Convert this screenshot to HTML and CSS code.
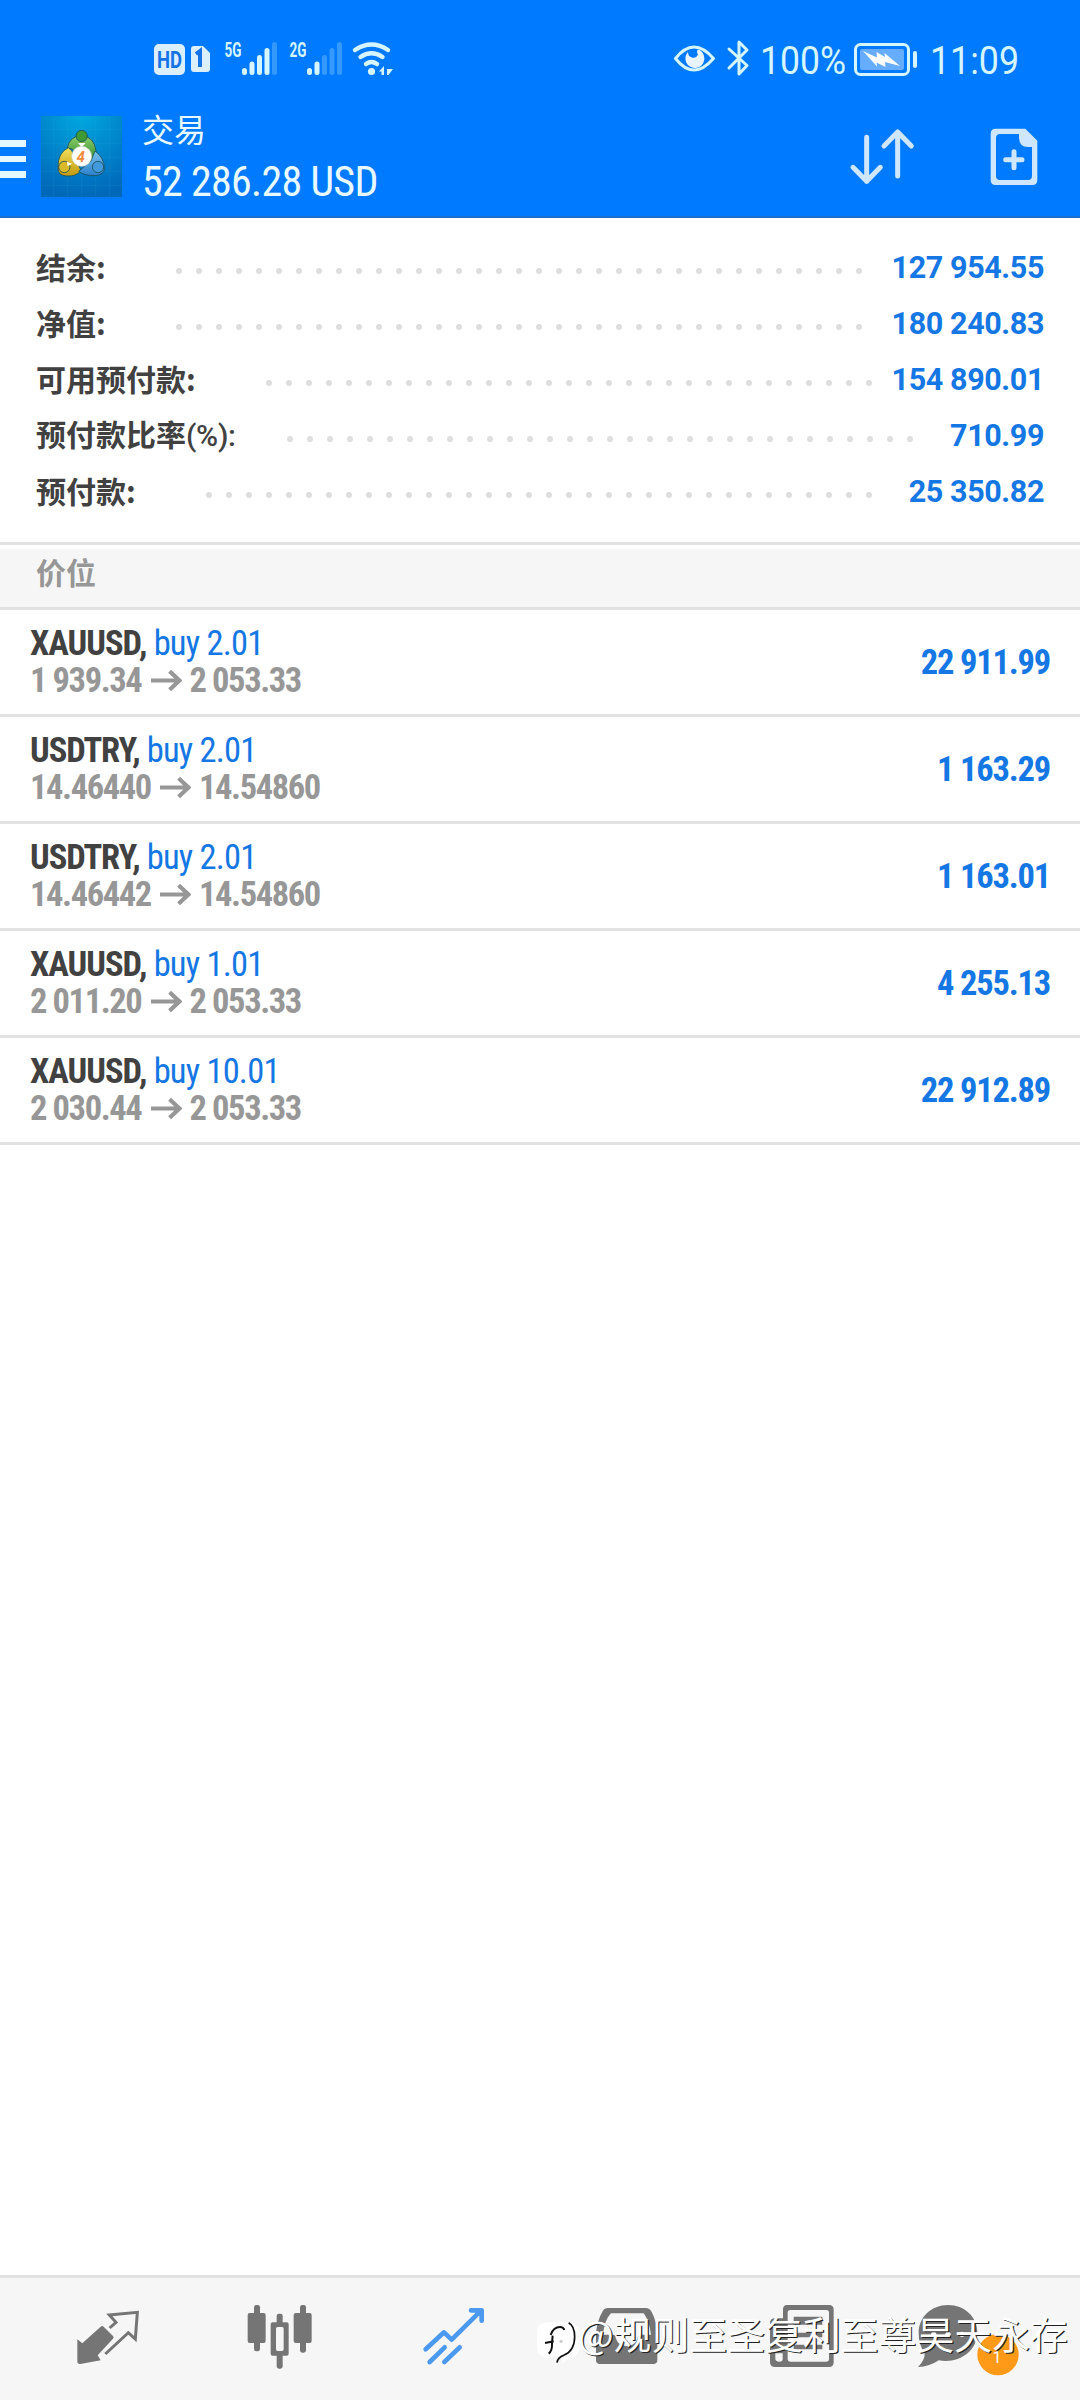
FILE: index.html
```html
<!DOCTYPE html>
<html lang="zh-CN">
<head>
<meta charset="utf-8">
<title>交易</title>
<link rel="stylesheet" href="styles.css">
</head>
<body>
<div class="app">
  <header class="top">
    <div class="status">
      <svg class="status-left" viewBox="0 0 300 80" width="300" height="80">
        <rect x="24" y="24" width="31" height="31" rx="5" fill="#dcefff"/>
        <text class="hd" x="27" y="48" textLength="25" lengthAdjust="spacingAndGlyphs">HD</text>
        <path d="M64 26h9l7 7v16q0 3-3 3H64q-3 0-3-3V29q0-3 3-3z" fill="#dcefff"/>
        <path d="M66 34l4-3v16" fill="none" stroke="#1673e6" stroke-width="4"/>
        <text class="net" x="94.500" y="37" textLength="17" lengthAdjust="spacingAndGlyphs">5G</text>
        <text class="net" x="159.500" y="37" textLength="17" lengthAdjust="spacingAndGlyphs">2G</text>
        <g fill="#d5f5ff">
          <rect x="112" y="48" width="5" height="7" rx="2.500"/><rect x="119.500" y="41.500" width="5" height="13.500" rx="2.500"/><rect x="127" y="35" width="5" height="20" rx="2.500"/><rect x="134.500" y="28" width="5" height="27" rx="2.500"/>
          <rect x="142" y="22" width="5" height="33" rx="2.500" opacity=".25"/>
          <rect x="177" y="48" width="5" height="7" rx="2.500"/><rect x="184.500" y="41.500" width="5" height="13.500" rx="2.500"/>
          <g opacity=".25"><rect x="192" y="35" width="5" height="20" rx="2.500"/><rect x="199.500" y="28" width="5" height="27" rx="2.500"/><rect x="207" y="22" width="5" height="33" rx="2.500"/></g>
          <circle cx="241.500" cy="51.500" r="3.600"/>
          <path d="M254 46v9h-2.500v-3.500H249zM257 49h6l-4.500 6H257z"/>
        </g>
        <g fill="none" stroke="#d5f5ff" stroke-width="4.500" stroke-linecap="round"><path d="M225 30q16.500-11 33 0M230.500 37q11-7.500 22 0M236 44q5.500-4 11 0"/></g>
      </svg>
      <svg class="status-right" viewBox="0 0 400 80" width="400" height="80">
        <g fill="none" stroke="#d5f5ff" stroke-width="3" stroke-linejoin="round" stroke-linecap="round">
          <path d="M25.500 38.500q18-23 38 0q-20 23-38 0z"/>
          <path d="M79 29l18 16.500-8 8.500V22l8 8L79 48"/>
          <rect x="205.500" y="24.500" width="53" height="30" rx="5"/>
        </g>
        <path d="M38 32a9.500 9.500 0 1 0 10-2.500q-2 2 0 5-2 4-6 3-4-1-4-5.500z" fill="#e8f4ff"/>
        <rect x="210" y="29" width="44" height="21" rx="2" fill="#67adff"/>
        <path d="M213 31l14 6.500-.5-5.500 8.500 5-.5-4L250 46l-15-4 .5 5-9-4.500.5 4z" fill="#fff"/>
        <rect x="263" y="31" width="4" height="17" rx="2" fill="#d5f5ff"/>
        <text class="sys" x="110" y="54" textLength="86" lengthAdjust="spacingAndGlyphs">100%</text>
        <text class="sys" x="280" y="54" textLength="89" lengthAdjust="spacingAndGlyphs">11:09</text>
      </svg>
    </div>
    <div class="bar">
      <div class="menu"><i></i><i></i><i></i></div>
      <svg class="logo" viewBox="0 0 243 243" width="81" height="81">
        <defs>
          <radialGradient id="sky" cx=".5" cy="0" r="1"><stop offset="0" stop-color="#00a8e0"/><stop offset=".6" stop-color="#0080c8"/><stop offset="1" stop-color="#0068b8"/></radialGradient>
          <linearGradient id="gr" x2="0" y2="1"><stop offset="0" stop-color="#8fcf6a"/><stop offset="1" stop-color="#2c8a2c"/></linearGradient>
          <linearGradient id="ye" x2="0" y2="1"><stop offset="0" stop-color="#f2e05a"/><stop offset="1" stop-color="#c29a10"/></linearGradient>
          <linearGradient id="bl" x2="0" y2="1"><stop offset="0" stop-color="#7cc4ee"/><stop offset="1" stop-color="#2a80cc"/></linearGradient>
        </defs>
        <rect width="243" height="243" fill="url(#sky)"/>
        <path d="M38 0v243M80 0v243M122 0v243M164 0v243M206 0v243M0 40h243M0 82h243M0 124h243M0 166h243M0 208h243" stroke="#3fb4e6" stroke-width="1.500" opacity=".25"/>
        <g stroke="#1d4f58" stroke-width="2.500">
          <path d="M79 97Q84 62 121 58Q160 62 165 105Q167 126 152 137L90 98z" fill="url(#gr)"/>
          <path d="M82 95Q50 110 51 155Q50 180 78 180Q105 182 120 164L92 104z" fill="url(#ye)"/>
          <path d="M162 105Q190 125 190 158Q190 175 165 179Q130 180 113 166L150 135z" fill="url(#bl)"/>
          <circle cx="122" cy="60" r="17" fill="#3d9a35"/><circle cx="70" cy="153" r="17" fill="#d7b92a"/><circle cx="171" cy="153" r="17" fill="#4299dc"/>
        </g>
        <path d="M111 81l11 13 12-13zM78 137l2 14 13-8z" fill="#fff"/>
        <circle cx="122" cy="121" r="30" fill="#fff" stroke="#c9d3c3" stroke-width="2"/>
        <text class="four" x="107" y="137">4</text>
      </svg>
      <div class="heading">
        <div class="title">交易</div>
        <div class="balance">52 286.28 USD</div>
      </div>
      <svg class="actions" viewBox="0 0 780 360" width="260" height="120">
        <g fill="none" stroke="#cfe6ff" stroke-width="15" stroke-linecap="round" stroke-linejoin="round">
          <path d="M140 112v132M99 202l41 42 41-42M233 228V96M192 138l41-42 41 42"/>
          <path d="M582 155v48M557 179h49"/>
        </g>
        <path d="M527 86h89l36 36v118q0 15-15 15H527q-15 0-15-15V101q0-15 15-15zM540 102q-12 0-12 12v114q0 12 12 12h84q12 0 12-12V141h-12q-26 0-27-28v-11z" fill="#cfe6ff" fill-rule="evenodd"/>
      </svg>
    </div>
  </header>

  <section class="summary">
    <div class="line"><span class="label">结余:</span><span class="leader" style="width:700px"></span><span class="value" style="width:175px">127 954.55</span></div>
    <div class="line"><span class="label">净值:</span><span class="leader" style="width:700px"></span><span class="value" style="width:175px">180 240.83</span></div>
    <div class="line"><span class="label">可用预付款:</span><span class="leader" style="width:620px"></span><span class="value" style="width:165px">154 890.01</span></div>
    <div class="line"><span class="label">预付款比率<span class="unit">(%):</span></span><span class="leader" style="width:640px"></span><span class="value" style="width:124px">710.99</span></div>
    <div class="line"><span class="label">预付款:</span><span class="leader" style="width:680px"></span><span class="value" style="width:165px">25 350.82</span></div>
  </section>

  <div class="section-title">价位</div>

  <main class="positions">
    <div class="position"><div class="info"><div class="symbol"><b>XAUUSD,</b> buy 2.01</div><div class="prices">1 939.34 <svg class="arrow" viewBox="0 0 30 22"><path d="M0 11h27M18 2l9.500 9-9.500 9"/></svg> 2 053.33</div></div><div class="profit">22 911.99</div></div>
    <div class="position"><div class="info"><div class="symbol"><b>USDTRY,</b> buy 2.01</div><div class="prices">14.46440 <svg class="arrow" viewBox="0 0 30 22"><path d="M0 11h27M18 2l9.500 9-9.500 9"/></svg> 14.54860</div></div><div class="profit">1 163.29</div></div>
    <div class="position"><div class="info"><div class="symbol"><b>USDTRY,</b> buy 2.01</div><div class="prices">14.46442 <svg class="arrow" viewBox="0 0 30 22"><path d="M0 11h27M18 2l9.500 9-9.500 9"/></svg> 14.54860</div></div><div class="profit">1 163.01</div></div>
    <div class="position"><div class="info"><div class="symbol"><b>XAUUSD,</b> buy 1.01</div><div class="prices">2 011.20 <svg class="arrow" viewBox="0 0 30 22"><path d="M0 11h27M18 2l9.500 9-9.500 9"/></svg> 2 053.33</div></div><div class="profit">4 255.13</div></div>
    <div class="position"><div class="info"><div class="symbol"><b>XAUUSD,</b> buy 10.01</div><div class="prices">2 030.44 <svg class="arrow" viewBox="0 0 30 22"><path d="M0 11h27M18 2l9.500 9-9.500 9"/></svg> 2 053.33</div></div><div class="profit">22 912.89</div></div>
  </main>

  <nav class="tabs">
    <svg viewBox="20 0 240 270"><path d="M51 148l15 12 55-50q4-4 9 0l28 28q4 4 0 8l-46 50 9 15-61 11q-9 1-9-8z" fill="#757575"/><path d="M148 114l19-17-20-22 84-8-6 80-21-19-69 64" fill="none" stroke="#757575" stroke-width="9"/></svg>
    <svg viewBox="541 0 240 270" fill="#757575"><rect x="564" y="69" width="54" height="90" rx="6"/><rect x="583" y="45" width="18" height="139" rx="7"/><rect x="702" y="69" width="54" height="90" rx="6"/><rect x="721" y="45" width="18" height="143" rx="7"/><rect x="651" y="71" width="18" height="35" rx="7"/><rect x="651" y="190" width="18" height="46" rx="7"/><path d="M639 97h42q6 0 6 6v88q0 6-6 6h-42q-6 0-6-6v-88q0-6 6-6zM654 111q-5 0-5 5v62q0 5 5 5h13q5 0 5-5v-62q0-5-5-5z" fill-rule="evenodd"/></svg>
    <svg viewBox="1061 0 240 270" fill="none" stroke="#4c9af0" stroke-width="14" stroke-linecap="round" stroke-linejoin="round"><path d="M1096 178l55-51 23 22 88-87M1232 61h32v31M1108 216l45-44M1152 216l46-44"/></svg>
    <svg viewBox="172 0 240 270"><path d="M235 54h113q12 0 18 12 16 30 17 66v78q0 12-12 12H211q-12 0-12-12v-78q3-40 20-68 5-10 16-10zM244 70q-20 20-24 64h30q8 0 8 10 8 24 33 24t33-24q0-10 10-10h30q-5-42-22-64z" fill="#757575" fill-rule="evenodd"/></svg>
    <svg viewBox="692 0 240 270"><path d="M770 45h126q14 0 14 14v158q0 14-14 14H734q-15 0-15-15V99q0-12 12-14h27V59q0-14 12-14zM780 60q-8 0-8 8v138q0 9 9 9h106q9 0 9-9V68q0-8-8-8zM735 190v18q2 7 12 7t10-7v-18z" fill="#757575" fill-rule="evenodd"/><path d="M790 80h86v24h-86zM790 128h86v14h-86zM790 164h86v14h-86z" fill="#757575"/></svg>
    <svg viewBox="1213 0 240 270"><path d="M1255 45c50 0 88 36 88 82 0 58-58 96-116 84-18 12-38 20-62 20 14-14 21-28 20-42-12-16-18-36-18-60 0-48 38-84 88-84z" fill="#757575"/><g fill="#f6f6f6"><circle cx="1212" cy="133" r="8"/><circle cx="1255" cy="133" r="8"/><circle cx="1297" cy="133" r="8"/></g><circle cx="1405" cy="194" r="62" fill="#ff9a18"/><text class="count" x="1402" y="218">1</text></svg>
  </nav>

  <div class="watermark">
    <svg viewBox="0 0 132 150" width="44" height="50"><path d="M35 10h65q32 6 32 40v30q0 30-30 36l-26 18 6-15-31-8q-10 11-30 2Q4 105 3 88V38Q4 14 26 12z" fill="#fff"/><path d="M98 11q18 10 18 42 0 42-33 56-17 5-20 22" fill="none" stroke="#111" stroke-width="5"/><path d="M27 72l26-5M44 48q8-24 28-24 10 0 13 9M38 104q11-8 10-30 1-14 2-24" fill="none" stroke="#111" stroke-width="6"/><circle cx="75" cy="67" r="5" fill="#ccc"/></svg>
    <span>@规则至圣复利至尊昊天永存</span>
  </div>
</div>
</body>
</html>
```

FILE: styles.css
```css
* { box-sizing: border-box; }
body { margin: 0; background: #fff; font-family: Roboto, "Noto Sans CJK SC", sans-serif; color: #414141; }
.app { position: relative; width: 1080px; height: 2400px; display: flex; flex-direction: column; overflow: hidden; }

.top { height: 218px; background: #007aff; border-bottom: 2px solid #1b6fcf; }
.status { height: 100px; padding: 20px 30px 0 130px; display: flex; justify-content: space-between; }
.hd { font: 700 24px Roboto, sans-serif; fill: #1673e6; }
.net { font: 700 20px Roboto, sans-serif; fill: #d5f5ff; }
.sys { font: 400 38px Roboto, sans-serif; fill: #d5f5ff; }
.bar { height: 116px; display: flex; }
.menu { width: 26px; margin: 40px 15px 0 0; display: flex; flex-direction: column; gap: 9px; }
.menu i { height: 6.500px; background: #e4f8ff; }
.logo { margin-top: 16px; }
.four { font: italic 700 44px Roboto, sans-serif; fill: #f08a3a; }
.heading { margin-left: 20px; color: #e8faff; }
.title { margin-top: 8px; font-size: 32px; line-height: 46px; }
.balance { font-size: 42px; line-height: 55px; font-stretch: 75%; letter-spacing: -.7px; white-space: nowrap; }
.actions { margin-left: auto; }

.summary { height: 324px; padding: 21px 36px 0; }
.line { height: 56px; display: flex; align-items: center; white-space: nowrap; }
.label { margin-top: -2px; font: 700 30px/44px "Noto Sans CJK SC", sans-serif; }
.unit { font-family: Roboto, sans-serif; font-weight: 500; letter-spacing: -.3px; }
.leader { height: 20px; margin-left: auto; position: relative; top: 4px; background: radial-gradient(circle, #dfdfdf 2.700px, transparent 3.500px) 0 0 / 20px 20px; }
.value { text-align: right; color: #1477e4; font-size: 30.500px; font-weight: 700; letter-spacing: -.4px; }

.section-title { height: 68px; padding: 0 36px; border: solid #e2e2e2; border-width: 3px 0; background: linear-gradient(#fff 3px, #f6f6f6 5px); color: #979797; font-size: 30px; font-weight: 700; line-height: 58px; }

.positions { font-stretch: 75%; font-size: 34.500px; white-space: nowrap; }
.position { height: 107px; padding: 15px 30px 0; border-bottom: 3px solid #e2e2e2; display: flex; justify-content: space-between; }
.symbol { height: 37px; line-height: 37px; color: #1477e4; letter-spacing: -.8px; }
.symbol b { color: #414141; letter-spacing: -1px; }
.prices { line-height: 37px; color: #979797; font-weight: 700; letter-spacing: -1.400px; }
.arrow { width: 31px; height: 23px; margin: 0 1px 0 3px; fill: none; stroke: #979797; stroke-width: 4; }
.profit { line-height: 75px; color: #1477e4; font-weight: 700; letter-spacing: -1.200px; }

.tabs { margin-top: auto; height: 125px; padding: 12px 19px 0 20px; background: #f6f6f6; border-top: 3px solid #e2e2e2; display: grid; grid-template-columns: repeat(6, 1fr); justify-items: center; }
.tabs svg { width: 80px; height: 90px; overflow: visible; }
.count { font: 400 48px Roboto, sans-serif; fill: #fff; text-anchor: middle; }

.watermark { position: absolute; left: 536px; top: 2307px; display: flex; align-items: flex-start; color: #fff; font: 400 37.700px/52px "Noto Sans CJK SC", sans-serif; text-shadow: 1.200px 1.200px 0 #222; white-space: nowrap; }
.watermark svg { margin: 12px -2px 0 0; }
.watermark span { letter-spacing: .15px; }
```
